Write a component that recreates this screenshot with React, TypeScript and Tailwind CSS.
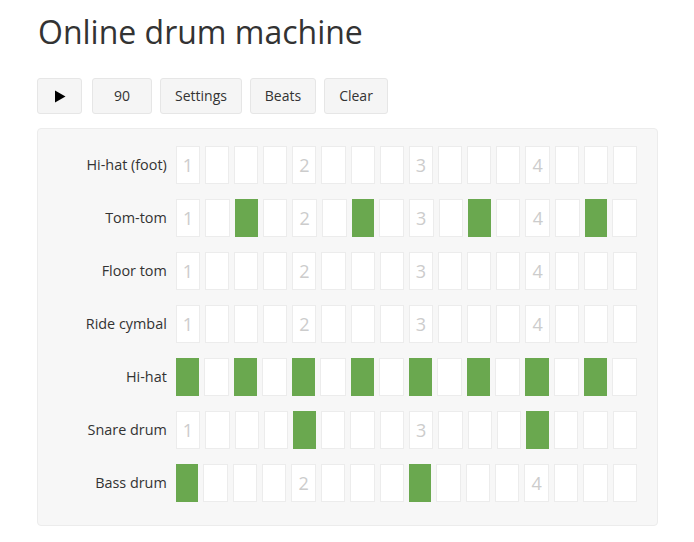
const rows: { name: string; active: number[] }[] = [
  { name: "Hi-hat (foot)", active: [] },
  { name: "Tom-tom", active: [2, 6, 10, 14] },
  { name: "Floor tom", active: [] },
  { name: "Ride cymbal", active: [] },
  { name: "Hi-hat", active: [0, 2, 4, 6, 8, 10, 12, 14] },
  { name: "Snare drum", active: [4, 12] },
  { name: "Bass drum", active: [0, 8] },
];

const steps = Array.from({ length: 16 }, (_, i) => i);

function ToolButton({ children, className = "" }: { children: React.ReactNode; className?: string }) {
  return (
    <button
      className={`h-9 rounded-[3px] border border-[#e6e6e6] bg-[#f5f5f5] text-sm text-[#333] flex items-center justify-center ${className}`}
    >
      {children}
    </button>
  );
}

export default function App() {
  return (
    <div
      className="min-h-[542px] bg-white pl-[37px] pt-[12px] text-[#333]"
      style={{ fontFamily: '"Open Sans", sans-serif' }}
    >
      <h1 className="text-[32px] leading-[40px] ml-px">Online drum machine</h1>

      <div className="mt-[26px] flex items-center">
        <ToolButton className="w-[45px]">
          <svg width="12" height="13" viewBox="0 0 12 13">
            <path d="M1 0.5 L11.5 6.5 L1 12.5 Z" fill="#000" />
          </svg>
        </ToolButton>
        <ToolButton className="ml-[10px] w-[60px]">90</ToolButton>
        <ToolButton className="ml-[8px] w-[82px]">Settings</ToolButton>
        <ToolButton className="ml-[8px] w-[66px]">Beats</ToolButton>
        <ToolButton className="ml-[8px] w-[64px]">Clear</ToolButton>
      </div>

      <div className="mt-[14px] w-[621px] rounded-[4px] border border-[#ececec] bg-[#f7f7f7] pt-[17px] pb-[23px] pr-[20px] flex flex-col gap-[15px]">
        {rows.map((row) => (
          <div key={row.name} className="flex items-center">
            <div className="w-[129px] text-right text-[14.4px]">{row.name}</div>
            <div className="ml-[9px] flex w-[462px] gap-[5px]">
              {steps.map((s) => {
                const on = row.active.includes(s);
                return (
                  <div
                    key={s}
                    className={`h-[38px] flex-1 flex items-center justify-center text-[18px] text-[#ccc] ${
                      on ? "bg-[#6aa84f]" : "border border-[#ececec] bg-white"
                    }`}
                  >
                    {!on && s % 4 === 0 ? s / 4 + 1 : ""}
                  </div>
                );
              })}
            </div>
          </div>
        ))}
      </div>
    </div>
  );
}
